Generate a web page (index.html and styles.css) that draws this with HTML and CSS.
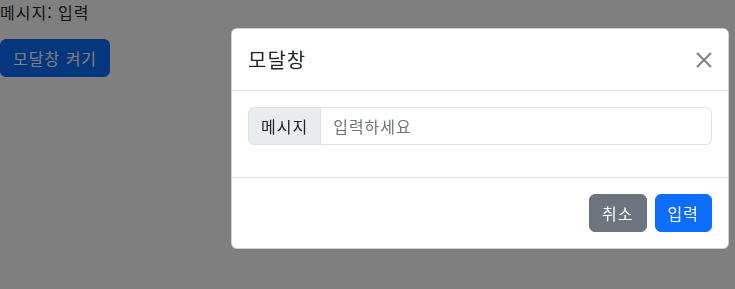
FILE: index.html
```html
<!DOCTYPE html>
<html lang="ko">
<head>
    <meta charset="UTF-8">
    <meta name="viewport" content="width=device-width, initial-scale=1.0">
    <title>모달창</title>
    <link rel="stylesheet" href="styles.css">
</head>
<body>
    <p class="message">메시지: 입력</p>
    <button class="btn btn-primary" type="button">모달창 켜기</button>

    <!-- Modal -->
    <div class="backdrop"></div>
    <div class="modal-content">
        <div class="modal-header">
            <h5 class="modal-title">모달창</h5>
            <button class="btn-close" type="button" aria-label="Close">
                <svg viewBox="0 0 16 16" width="16" height="16">
                    <path d="M1 1 L15 15 M15 1 L1 15" stroke="#000" stroke-width="2" fill="none"/>
                </svg>
            </button>
        </div>
        <div class="modal-body">
            <div class="input-group">
                <span class="input-group-text">메시지</span>
                <input class="form-control" type="text" placeholder="입력하세요">
            </div>
        </div>
        <div class="modal-footer">
            <button class="btn btn-secondary" type="button">취소</button>
            <button class="btn btn-primary" type="button">입력</button>
        </div>
    </div>
</body>
</html>
```

FILE: styles.css
```css
* {
    margin: 0;
    padding: 0;
    box-sizing: border-box;
}

body {
    font-family: "Noto Sans CJK KR", "Noto Sans", sans-serif;
    font-size: 16px;
    line-height: 1.5;
    letter-spacing: 1px;
    color: #212529;
    background: #fff;
}

.message {
    margin-bottom: 15px;
}

.btn {
    display: inline-block;
    height: 38px;
    font-family: inherit;
    font-size: 16px;
    line-height: 1.5;
    letter-spacing: 1px;
    padding: 6px 12px;
    border: 1px solid transparent;
    border-radius: 6px;
    color: #fff;
    cursor: pointer;
}

.btn-primary {
    background: #0d6efd;
    border-color: #0d6efd;
}

.btn-secondary {
    background: #6c757d;
    border-color: #6c757d;
}

.backdrop {
    position: fixed;
    inset: 0;
    background: rgba(0, 0, 0, 0.5);
}

.modal-content {
    position: fixed;
    top: 28px;
    left: 231px;
    width: 498px;
    display: flex;
    flex-direction: column;
    background: #fff;
    border: 1px solid rgba(0, 0, 0, 0.175);
    border-radius: 6px;
}

.modal-header {
    display: flex;
    align-items: center;
    justify-content: space-between;
    height: 62px;
    padding: 0 16px;
    border-bottom: 1px solid #dee2e6;
}

.modal-title {
    font-size: 20px;
    font-weight: 400;
    line-height: 1.5;
}

.btn-close {
    display: flex;
    align-items: center;
    justify-content: center;
    width: 32px;
    height: 32px;
    margin-right: -8px;
    background: none;
    border: none;
    opacity: 0.5;
    cursor: pointer;
}

.modal-body {
    height: 87px;
    padding: 16px 16px 0;
    border-bottom: 1px solid #dee2e6;
}

.input-group {
    display: flex;
    height: 38px;
}

.input-group-text {
    display: flex;
    align-items: center;
    padding: 6px 12px;
    background: #e9ecef;
    border: 1px solid #dee2e6;
    border-radius: 6px 0 0 6px;
}

.form-control {
    flex: 1;
    min-width: 0;
    padding: 6px 12px;
    font-family: inherit;
    font-size: 16px;
    letter-spacing: 1px;
    color: #212529;
    border: 1px solid #dee2e6;
    border-left: none;
    border-radius: 0 6px 6px 0;
    outline: none;
}

.form-control::placeholder {
    color: #6c757d;
}

.modal-footer {
    display: flex;
    align-items: flex-start;
    justify-content: flex-end;
    gap: 8px;
    height: 70px;
    padding: 16px 16px 0;
}
```
